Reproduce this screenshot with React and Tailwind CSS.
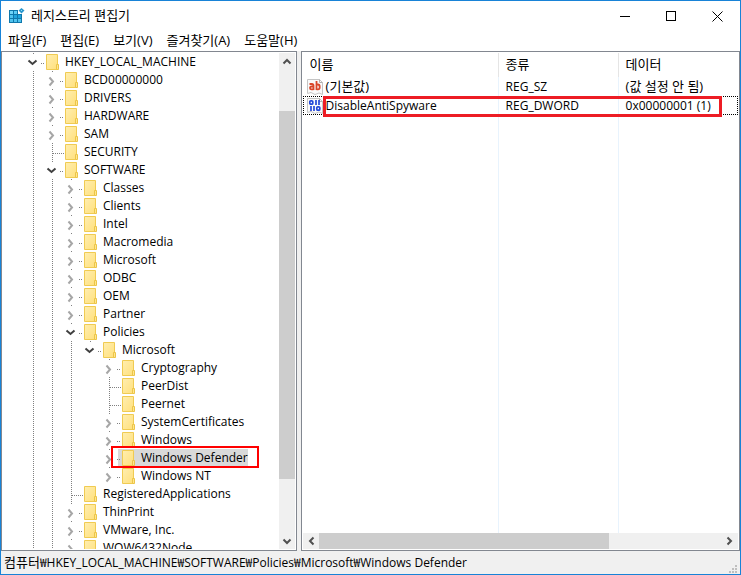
import { useState } from 'react'

const TREE = [
  { name: 'HKEY_LOCAL_MACHINE', depth: 0, state: 'open' },
  { name: 'BCD00000000', depth: 1, state: 'closed' },
  { name: 'DRIVERS', depth: 1, state: 'closed' },
  { name: 'HARDWARE', depth: 1, state: 'closed' },
  { name: 'SAM', depth: 1, state: 'closed' },
  { name: 'SECURITY', depth: 1, state: 'leaf' },
  { name: 'SOFTWARE', depth: 1, state: 'open' },
  { name: 'Classes', depth: 2, state: 'closed' },
  { name: 'Clients', depth: 2, state: 'closed' },
  { name: 'Intel', depth: 2, state: 'closed' },
  { name: 'Macromedia', depth: 2, state: 'closed' },
  { name: 'Microsoft', depth: 2, state: 'closed' },
  { name: 'ODBC', depth: 2, state: 'closed' },
  { name: 'OEM', depth: 2, state: 'closed' },
  { name: 'Partner', depth: 2, state: 'closed' },
  { name: 'Policies', depth: 2, state: 'open' },
  { name: 'Microsoft', depth: 3, state: 'open' },
  { name: 'Cryptography', depth: 4, state: 'closed' },
  { name: 'PeerDist', depth: 4, state: 'leaf' },
  { name: 'Peernet', depth: 4, state: 'leaf' },
  { name: 'SystemCertificates', depth: 4, state: 'closed' },
  { name: 'Windows', depth: 4, state: 'closed' },
  { name: 'Windows Defender', depth: 4, state: 'closed', marked: true },
  { name: 'Windows NT', depth: 4, state: 'closed' },
  { name: 'RegisteredApplications', depth: 2, state: 'leaf' },
  { name: 'ThinPrint', depth: 2, state: 'closed' },
  { name: 'VMware, Inc.', depth: 2, state: 'closed' },
  { name: 'WOW6432Node', depth: 2, state: 'closed' },
]

const MENUS = ['파일(F)', '편집(E)', '보기(V)', '즐겨찾기(A)', '도움말(H)']

function RegeditLogo() {
  return (
    <svg width="16" height="16" viewBox="0 0 16 16" shapeRendering="crispEdges" aria-hidden="true">
      <rect x="0" y="2" width="13" height="13" fill="#0f77ab" />
      <rect x="1" y="3" width="3" height="3" fill="#6fd3f7" />
      <rect x="5" y="3" width="3" height="3" fill="#5ccbf4" />
      <rect x="1" y="7" width="3" height="3" fill="#4fc3ee" />
      <rect x="5" y="7" width="3" height="3" fill="#1fa3dc" />
      <rect x="9" y="7" width="3" height="3" fill="#1fa3dc" />
      <rect x="1" y="11" width="3" height="3" fill="#4fc3ee" />
      <rect x="5" y="11" width="3" height="3" fill="#4fc3ee" />
      <rect x="9" y="11" width="3" height="3" fill="#4fc3ee" />
      <rect x="9" y="0" width="7" height="6" fill="#ffffff" />
      <path d="M12.5 0L15.5 2.5L12.5 5.5L9.5 2.5Z" fill="#2a97cd" shapeRendering="auto" />
      <rect x="12" y="2" width="1" height="1" fill="#8fdcf8" />
    </svg>
  )
}

function Folder() {
  return (
    <svg width="13" height="16" viewBox="0 0 13 16" className="shrink-0" aria-hidden="true">
      <defs>
        <linearGradient id="folderFill" x1="0" y1="0" x2="1" y2="1">
          <stop offset="0" stopColor="#ffeeb0" />
          <stop offset="1" stopColor="#ffe07c" />
        </linearGradient>
      </defs>
      <path d="M0.5 0.5H11.5V15.5H0.5Z" fill="url(#folderFill)" stroke="#f0cb52" />
      <path d="M10.5 10.5H12.5V15.5H10.5Z" fill="#ffe68f" stroke="#ecc548" />
    </svg>
  )
}

function Guide({ visible }) {
  return (
    <svg width="19" height="18" className="shrink-0" aria-hidden="true">
      {visible && <path d="M9.5 0V18" stroke="#808080" strokeDasharray="1 1" />}
    </svg>
  )
}

function Expander({ state }) {
  return (
    <svg width="22" height="18" className="block" aria-hidden="true">
      {state === 'leaf' && (
        <path d="M9.5 0V18M10 10.5H22" fill="none" stroke="#808080" strokeDasharray="1 1" />
      )}
      {state !== 'leaf' && (
        <path d="M9 0.5H10M17 10.5H18M19 10.5H20" stroke="#808080" />
      )}
      {state === 'closed' && (
        <path d="M6.5 6.5L10 10.5L6.5 14.5" fill="none" stroke="#a6a6a6" strokeWidth="2" />
      )}
      {state === 'open' && (
        <path d="M4.5 7.5L8.5 11L12.5 7.5" fill="none" stroke="#404040" strokeWidth="2" />
      )}
    </svg>
  )
}

// The branch at level 3 has no siblings below, so it draws no guide
function hasGuide(level) {
  return level !== 3
}

function TreeRow({ item, selected, onSelect }) {
  return (
    <li className="relative flex h-[18px]">
      {Array.from({ length: item.depth }, (_, level) => (
        <Guide key={level} visible={hasGuide(level)} />
      ))}
      <div className="relative z-10 w-[18px] shrink-0">
        <Expander state={item.state} />
      </div>
      <div className="relative">
        <button
          type="button"
          onClick={onSelect}
          className={`flex h-[18px] items-center gap-1.5 whitespace-nowrap pl-1 leading-[18px] ${
            selected ? 'bg-[#d9d9d9]' : ''
          }`}
        >
          <Folder />
          {item.name}
        </button>
        {item.marked && (
          <span className="pointer-events-none absolute -top-[3px] -bottom-px -left-[7px] -right-[11px] z-20 border-2 border-[#ff0000]" />
        )}
      </div>
    </li>
  )
}

function Arrow({ d }) {
  return (
    <svg width="16" height="16" viewBox="0 0 16 16" aria-hidden="true">
      <path d={d} fill="none" stroke="#505050" strokeWidth="2" />
    </svg>
  )
}

function VerticalScrollbar() {
  return (
    <div className="flex w-4 shrink-0 flex-col bg-[#f0f0f0]">
      <button type="button" aria-label="위로">
        <Arrow d="M4.5 10.5L8 7L11.5 10.5" />
      </button>
      <div className="grow-[42]" />
      <div className="grow-[368] bg-[#cdcdcd]" />
      <div className="grow-[54]" />
      <button type="button" aria-label="아래로">
        <Arrow d="M4.5 6.5L8 10L11.5 6.5" />
      </button>
    </div>
  )
}

function HorizontalScrollbar() {
  return (
    <div className="flex h-4 shrink-0 bg-[#f0f0f0]">
      <button type="button" aria-label="왼쪽으로">
        <Arrow d="M10.5 4.5L7 8L10.5 11.5" />
      </button>
      <div className="grow-[289] bg-[#cdcdcd]" />
      <div className="grow-[113]" />
      <button type="button" aria-label="오른쪽으로">
        <Arrow d="M5.5 4.5L9 8L5.5 11.5" />
      </button>
    </div>
  )
}

function StringIcon() {
  return (
    <svg width="16" height="16" viewBox="0 0 16 16" className="shrink-0" aria-hidden="true">
      <path d="M0.5 0.5H12.5L15.5 3.5V15.5L12 14L8 15.5L4 13.5L0.5 14.5Z" fill="#fafafa" stroke="#c4c4c4" />
      <path d="M12.5 0.5V3.5H15.5" fill="none" stroke="#b0b0b0" />
      <path d="M2.5 5H5Q6.5 5 6.5 6.5V11M6.5 7.5H4.5Q3 7.5 3 9Q3 10.3 4.5 10.3H6.5" fill="none" stroke="#d9472b" strokeWidth="1.8" />
      <path d="M9.5 2V11M9.5 5.5H11Q12.7 5.5 12.7 7.9Q12.7 10.3 11 10.3H9.5" fill="none" stroke="#d9472b" strokeWidth="1.8" />
    </svg>
  )
}

function BinaryIcon() {
  return (
    <svg width="16" height="16" viewBox="0 0 16 16" className="shrink-0" aria-hidden="true">
      <path d="M0.5 0.5H12.5L15.5 3.5V15.5L12 14L8 15.5L4 13.5L0.5 14.5Z" fill="#fafafa" stroke="#c4c4c4" />
      <path d="M12.5 0.5V3.5H15.5" fill="none" stroke="#b0b0b0" />
      <g fill="none" stroke="#2448d8" strokeWidth="1.7">
        <rect x="2.8" y="2.8" width="3" height="3.4" rx="1" />
        <path d="M9 2V7M12 2V7M4 8V13M7 8V13" />
        <rect x="9.8" y="8.8" width="3" height="3.4" rx="1" />
      </g>
    </svg>
  )
}

function ValueList() {
  return (
    <div className="relative min-h-0 flex-1">
      <table className="h-full w-full table-fixed border-separate border-spacing-0 text-left">
        <colgroup>
          <col className="w-[196px]" />
          <col className="w-[120px]" />
          <col />
        </colgroup>
        <thead className="text-[13px]">
          <tr className="h-6">
            <th className="border-r border-[#e5e5e5] p-0 pl-[7px] font-normal">이름</th>
            <th className="border-r border-[#e5e5e5] p-0 pl-[7px] font-normal">종류</th>
            <th className="p-0 pl-[7px] font-normal">데이터</th>
          </tr>
        </thead>
        <tbody>
          <tr className="h-[19px]">
            <td className="border-r border-[#e8f3fd] p-0 pl-1">
              <div className="flex h-[19px] items-center gap-[3px] text-[13px]">
                <StringIcon />
                (기본값)
              </div>
            </td>
            <td className="border-r border-[#e8f3fd] p-0 pl-[7px]">REG_SZ</td>
            <td className="p-0 pl-[7px] text-[13px] leading-[19px]">(값 설정 안 됨)</td>
          </tr>
          <tr className="h-[19px] outline-1 -outline-offset-1 outline-dotted outline-black">
            <td className="border-r border-[#e8f3fd] p-0 pl-1">
              <div className="flex h-[19px] items-center gap-[3px]">
                <BinaryIcon />
                DisableAntiSpyware
              </div>
            </td>
            <td className="border-r border-[#e8f3fd] p-0 pl-[7px]">REG_DWORD</td>
            <td className="p-0 pl-[7px]">0x00000001 (1)</td>
          </tr>
          <tr>
            <td className="border-r border-[#e8f3fd] p-0" />
            <td className="border-r border-[#e8f3fd] p-0" />
            <td className="p-0" />
          </tr>
        </tbody>
      </table>
      <div className="pointer-events-none absolute top-[43px] left-5 right-4 h-[21px] border-3 border-[#ed1c24]" />
    </div>
  )
}

function TitleBar() {
  return (
    <header className="flex h-[30px] shrink-0 items-center pl-2">
      <RegeditLogo />
      <h1 className="flex-1 pl-1.5 text-[13px]">레지스트리 편집기</h1>
      <button type="button" aria-label="최소화" className="flex w-[46px] justify-center">
        <svg width="11" height="11">
          <path d="M0 5.5H10" stroke="#000" />
        </svg>
      </button>
      <button type="button" aria-label="최대화" className="flex w-[46px] justify-center">
        <svg width="11" height="11">
          <rect x="0.5" y="0.5" width="9" height="9" fill="none" stroke="#000" />
        </svg>
      </button>
      <button type="button" aria-label="닫기" className="flex w-[46px] justify-center">
        <svg width="11" height="11">
          <path d="M0.5 0.5L10.5 10.5M10.5 0.5L0.5 10.5" stroke="#000" />
        </svg>
      </button>
    </header>
  )
}

function App() {
  const [selected, setSelected] = useState(22)

  return (
    <div className="flex h-screen flex-col overflow-hidden border border-[#1883d7] bg-white font-['Open_Sans','Noto_Sans_CJK_KR',sans-serif] text-xs text-black">
      <TitleBar />
      <nav className="flex h-5 shrink-0 items-center gap-3.5 pl-[7px] text-[13px]">
        {MENUS.map((menu) => (
          <button key={menu} type="button">
            {menu}
          </button>
        ))}
      </nav>

      <main className="flex min-h-0 flex-1 gap-1 bg-[#f0f0f0]">
        <section className="flex w-2/5 shrink-0 overflow-hidden border border-[#828790] bg-white p-px">
          <ul className="min-w-0 flex-1 overflow-hidden pl-[21px]">
            {TREE.map((item, i) => (
              <TreeRow
                key={i}
                item={item}
                selected={selected === i}
                onSelect={() => setSelected(i)}
              />
            ))}
          </ul>
          <VerticalScrollbar />
        </section>
        <section className="flex min-w-0 flex-1 flex-col border border-[#828790] bg-white p-px">
          <ValueList />
          <HorizontalScrollbar />
        </section>
      </main>

      <footer className="flex h-[23px] shrink-0 items-center justify-between bg-[#f0f0f0] pl-[3px]">
        <p>
          <span className="text-[13px]">컴퓨터</span>
          ₩HKEY_LOCAL_MACHINE₩SOFTWARE₩Policies₩Microsoft₩Windows Defender
        </p>
        <svg width="11" height="9" className="self-end" fill="#bfbfbf" aria-hidden="true">
          <path d="M6 0h2v2h-2zM3 3h2v2h-2zM6 3h2v2h-2zM0 6h2v2h-2zM3 6h2v2h-2zM6 6h2v2h-2z" />
        </svg>
      </footer>
    </div>
  )
}

export default App
